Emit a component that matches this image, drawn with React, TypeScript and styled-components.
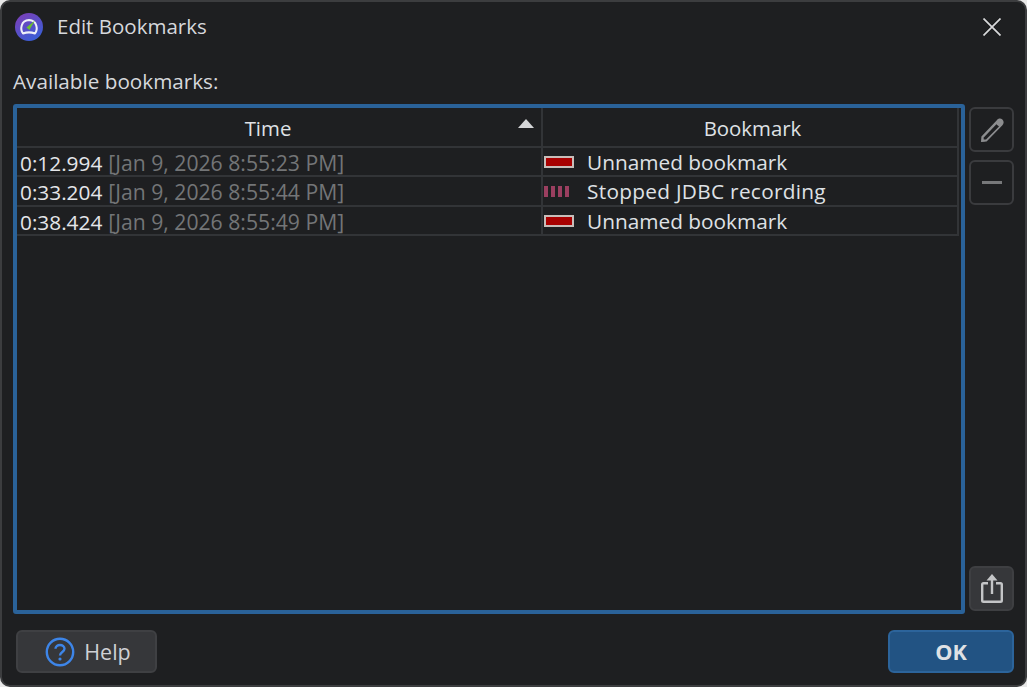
import React from "react";
import styled, { createGlobalStyle } from "styled-components";

const Global = createGlobalStyle`
  html, body { margin: 0; padding: 0; background: #e8e8e8; }
  #root { width: 1027px; height: 687px; }
  * { box-sizing: border-box; }
`;

const Dialog = styled.div`
  width: 1027px;
  height: 687px;
  background: #1e1f21;
  border: 2px solid #3c3d3f;
  border-radius: 10px;
  display: flex;
  flex-direction: column;
  padding: 0 11px 12px 11px;
  font-family: "Open Sans", "Noto Sans", sans-serif;
  color: #dfe1e5;
  overflow: hidden;
`;

const TitleBar = styled.div`
  height: 50px;
  display: flex;
  align-items: center;
  flex: none;
`;

const AppIcon = styled.svg`
  width: 28px;
  height: 28px;
  margin-left: 2px;
  flex: none;
`;

const Title = styled.div`
  margin-left: 14px;
  font-size: 20.5px;
  color: #d6d8dc;
  flex: 1;
  margin-top: -2px;
`;

const CloseIcon = styled.svg`
  width: 18px;
  height: 18px;
  margin-right: 13px;
  margin-top: -1px;
`;

const Label = styled.div`
  margin-top: 16px;
  height: 26px;
  font-size: 20.7px;
  line-height: 26px;
  color: #d6d8dc;
  flex: none;
`;

const Middle = styled.div`
  margin-top: 10px;
  flex: 1;
  display: flex;
  gap: 4px;
  min-height: 0;
`;

const TableFrame = styled.div`
  width: 952px;
  height: 510px;
  border: 4px solid #2a6299;
  border-radius: 3px;
  flex: none;
`;

const Row = styled.div<{ $h: number }>`
  display: grid;
  grid-template-columns: 526px 416px;
  height: ${(p) => p.$h}px;
  border-bottom: 2px solid #323437;
  width: 942px;
`;

const HeaderCell = styled.div<{ $offset: number }>`
  position: relative;
  display: flex;
  align-items: center;
  justify-content: center;
  font-size: 20.4px;
  color: #dfe1e5;
  border-right: 2px solid #323437;
  padding-top: 1px;
  padding-left: ${(p) => (p.$offset > 0 ? p.$offset : 0)}px;
  padding-right: ${(p) => (p.$offset < 0 ? -p.$offset : 0)}px;
`;

const SortArrow = styled.span`
  position: absolute;
  right: 7px;
  top: 11px;
  width: 0;
  height: 0;
  border-left: 8px solid transparent;
  border-right: 8px solid transparent;
  border-bottom: 9px solid #d4d5d7;
`;

const Cell = styled.div<{ $pad: number }>`
  display: flex;
  align-items: center;
  white-space: nowrap;
  border-right: 2px solid #323437;
  padding-left: ${(p) => p.$pad}px;
`;

const Time = styled.span`
  color: #e4e6ea;
  font-size: 20.8px;
`;

const Stamp = styled.span`
  color: #737577;
  font-size: 21.2px;
  margin-left: 6px;
`;

const SolidSwatch = styled.span`
  width: 30px;
  height: 12px;
  background: #a80000;
  border: 2px solid #c8bdb9;
  margin-right: 13px;
  margin-top: -1px;
  flex: none;
`;

const DashSwatch = styled.span`
  width: 30px;
  height: 12px;
  margin-right: 13px;
  flex: none;
  display: flex;
  gap: 3px;
`;

const Dash = styled.span`
  width: 4px;
  height: 11px;
  background: #9b3f60;
`;

const BookmarkName = styled.span<{ $wide?: boolean }>`
  color: #dfe1e5;
  font-size: 20.8px;
  margin-top: -2px;
  letter-spacing: ${(p) => (p.$wide ? "0.3px" : "0")};
`;

const SideColumn = styled.div`
  flex: 1;
  display: flex;
  flex-direction: column;
  gap: 8px;
  height: 507px;
  padding-top: 3px;
`;

const ToolButton = styled.div<{ $filled?: boolean }>`
  width: 45px;
  height: 45px;
  border-radius: 6px;
  border: 2px solid ${(p) => (p.$filled ? "#3e3f42" : "#3a3b3e")};
  background: ${(p) => (p.$filled ? "#36373a" : "transparent")};
  display: flex;
  align-items: center;
  justify-content: center;
  flex: none;
`;

const Spacer = styled.div`
  flex: 1;
`;

const Footer = styled.div`
  margin-top: 16px;
  display: flex;
  justify-content: space-between;
  align-items: center;
  flex: none;
  padding-left: 3px;
`;

const HelpButton = styled.div`
  width: 141px;
  height: 43px;
  border-radius: 6px;
  background: #36373a;
  border: 2px solid #3f4043;
  display: flex;
  align-items: center;
  justify-content: center;
  gap: 9px;
  font-size: 21.5px;
  color: #cfd1d5;
  padding-left: 3px;
`;

const OkButton = styled.div`
  width: 126px;
  height: 43px;
  border-radius: 6px;
  background: #225383;
  border: 2px solid #2c649b;
  display: flex;
  align-items: center;
  justify-content: center;
  font-size: 21.7px;
  font-weight: 700;
  color: #dfe1e5;
`;

const rows = [
  { t: "0:12.994", s: "[Jan 9, 2026 8:55:23 PM]", n: "Unnamed bookmark", dash: false, h: 29 },
  { t: "0:33.204", s: "[Jan 9, 2026 8:55:44 PM]", n: "Stopped JDBC recording", dash: true, h: 30 },
  { t: "0:38.424", s: "[Jan 9, 2026 8:55:49 PM]", n: "Unnamed bookmark", dash: false, h: 29 },
];

export default function App() {
  return (
    <>
      <Global />
      <Dialog>
        <TitleBar>
          <AppIcon viewBox="0 0 28 28">
            <defs>
              <linearGradient id="g" x1="0.2" y1="0" x2="0.8" y2="1">
                <stop offset="0" stopColor="#7b3fb8" />
                <stop offset="1" stopColor="#3560d8" />
              </linearGradient>
            </defs>
            <circle cx="14" cy="14" r="14" fill="url(#g)" />
            <path d="M8 20.5 C5 16.5 5.6 7.5 14 7 C22.4 7.5 23 16.5 20 20.5 C16 19 12 19 8 20.5 Z" fill="none" stroke="#eef0f8" strokeWidth="2" strokeLinejoin="round" />
            <path d="M11.4 14.6 L20 7.6 L14.4 17 Z" fill="#6cc02e" />
          </AppIcon>
          <Title>Edit Bookmarks</Title>
          <CloseIcon viewBox="0 0 18 18">
            <path d="M0.5 0.5 L17.5 17.5 M17.5 0.5 L0.5 17.5" stroke="#d8d9db" strokeWidth="1.7" fill="none" />
          </CloseIcon>
        </TitleBar>
        <Label>Available bookmarks:</Label>
        <Middle>
          <TableFrame>
            <Row $h={40}>
              <HeaderCell $offset={-22}>
                Time
                <SortArrow />
              </HeaderCell>
              <HeaderCell $offset={5}>Bookmark</HeaderCell>
            </Row>
            {rows.map((r) => (
              <Row $h={r.h} key={r.t}>
                <Cell $pad={3}>
                  <Time>{r.t}</Time>
                  <Stamp>{r.s}</Stamp>
                </Cell>
                <Cell $pad={1}>
                  {r.dash ? (
                    <DashSwatch>
                      <Dash />
                      <Dash />
                      <Dash />
                      <Dash />
                    </DashSwatch>
                  ) : (
                    <SolidSwatch />
                  )}
                  <BookmarkName $wide={r.dash}>{r.n}</BookmarkName>
                </Cell>
              </Row>
            ))}
          </TableFrame>
          <SideColumn>
            <ToolButton>
              <svg width="26" height="26" viewBox="0 0 26 26">
                <path d="M2 25 L2.4 19.4 L17.6 3.4 C19.2 1.4 21.6 1 23.4 2.6 C25.2 4.4 25 6.8 23.2 8.4 L7.6 24.4 Z" fill="#8c8d8f" />
                <path d="M4.6 22.6 L4.8 20.4 L17.4 7.2 L20 9.6 L7 22.4 Z" fill="#1e1f21" />
                <path d="M3 24.6 L3.2 21.6 L6 24.2 Z" fill="#8c8d8f" />
              </svg>
            </ToolButton>
            <ToolButton>
              <svg width="20" height="3" viewBox="0 0 20 3">
                <rect x="0" y="0" width="20" height="3" fill="#77787a" />
              </svg>
            </ToolButton>
            <Spacer />
            <ToolButton $filled>
              <svg width="22" height="29" viewBox="0 0 22 29">
                <path d="M7 9.2 H2.5 Q1.2 9.2 1.2 10.5 V26.5 Q1.2 27.8 2.5 27.8 H19.5 Q20.8 27.8 20.8 26.5 V10.5 Q20.8 9.2 19.5 9.2 H15" fill="none" stroke="#c4c5c7" strokeWidth="2.4" />
                <path d="M11 20 V2.5" fill="none" stroke="#c4c5c7" strokeWidth="2.4" />
                <path d="M11 0 L16.5 6.5 H5.5 Z" fill="#c4c5c7" />
              </svg>
            </ToolButton>
          </SideColumn>
        </Middle>
        <Footer>
          <HelpButton>
            <svg width="30" height="30" viewBox="0 0 30 30">
              <circle cx="15" cy="15" r="13.2" fill="none" stroke="#3d85e8" strokeWidth="2.4" />
              <path d="M10.5 11.8 C10.5 6.8 19.5 6.8 19.5 11.8 C19.5 15 15 15 15 18.5" fill="none" stroke="#3d85e8" strokeWidth="2.4" />
              <circle cx="15" cy="22" r="1.6" fill="#3d85e8" />
            </svg>
            Help
          </HelpButton>
          <OkButton>OK</OkButton>
        </Footer>
      </Dialog>
    </>
  );
}
